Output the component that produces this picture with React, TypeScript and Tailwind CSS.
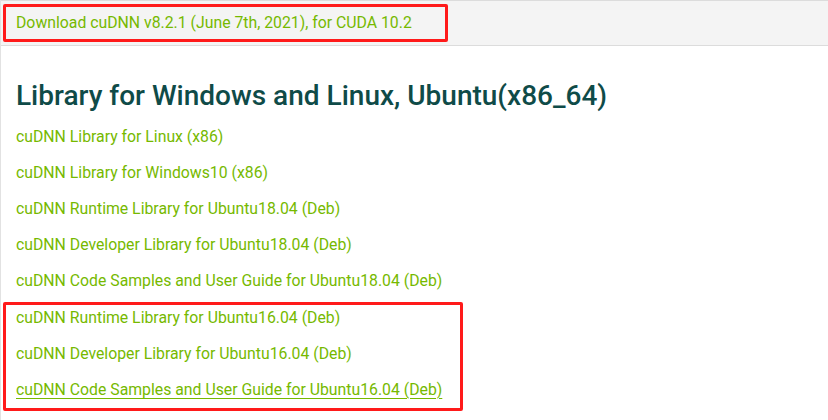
const FONT = "font-['Roboto','Liberation_Sans',sans-serif]"

const topLinks = [
  'cuDNN Library for Linux (x86)',
  'cuDNN Library for Windows10 (x86)',
  'cuDNN Runtime Library for Ubuntu18.04 (Deb)',
  'cuDNN Developer Library for Ubuntu18.04 (Deb)',
  'cuDNN Code Samples and User Guide for Ubuntu18.04 (Deb)',
]

const boxedLinks = [
  'cuDNN Runtime Library for Ubuntu16.04 (Deb)',
  'cuDNN Developer Library for Ubuntu16.04 (Deb)',
  'cuDNN Code Samples and User Guide for Ubuntu16.04 (Deb)',
]

function DownloadLink({ label, underline }: { label: string; underline?: boolean }) {
  return (
    <div className="flex h-9 items-center">
      <a
        href="#"
        className={`text-[15.8px] leading-none text-[#76b900] ${underline ? 'underline decoration-[#76b900] underline-offset-[3px]' : ''}`}
      >
        {label}
      </a>
    </div>
  )
}

export default function App() {
  return (
    <div className={`${FONT} h-[420px] w-[828px] overflow-hidden border-l border-[#e2e2e2] bg-white`}>
      <div className="h-[46px] border-y border-[#dcdcdc] bg-[#f4f4f4] pl-[2px] pt-[3px]">
        <div className="flex h-[38px] w-[445px] items-center rounded-[2px] border-[3px] border-[#ff1a1a] pl-[10px]">
          <a href="#" className="text-[15.8px] leading-none text-[#76b900]">
            Download cuDNN v8.2.1 (June 7th, 2021), for CUDA 10.2
          </a>
        </div>
      </div>

      <h2 className="mt-[36px] pl-[15px] text-[28px] font-medium leading-none text-[#0f4b48]">
        Library for Windows and Linux, Ubuntu(x86_64)
      </h2>

      <div className="mt-[9px] pl-[15px]">
        {topLinks.map((l) => (
          <DownloadLink key={l} label={l} />
        ))}
      </div>

      <div className="ml-[2px] mt-[3px] w-[460px] rounded-[2px] border-[3px] border-[#ff1a1a] pl-[10px]">
        <div className="-mt-[5px]">
          {boxedLinks.map((l, i) => (
            <DownloadLink key={l} label={l} underline={i === boxedLinks.length - 1} />
          ))}
        </div>
      </div>
    </div>
  )
}
